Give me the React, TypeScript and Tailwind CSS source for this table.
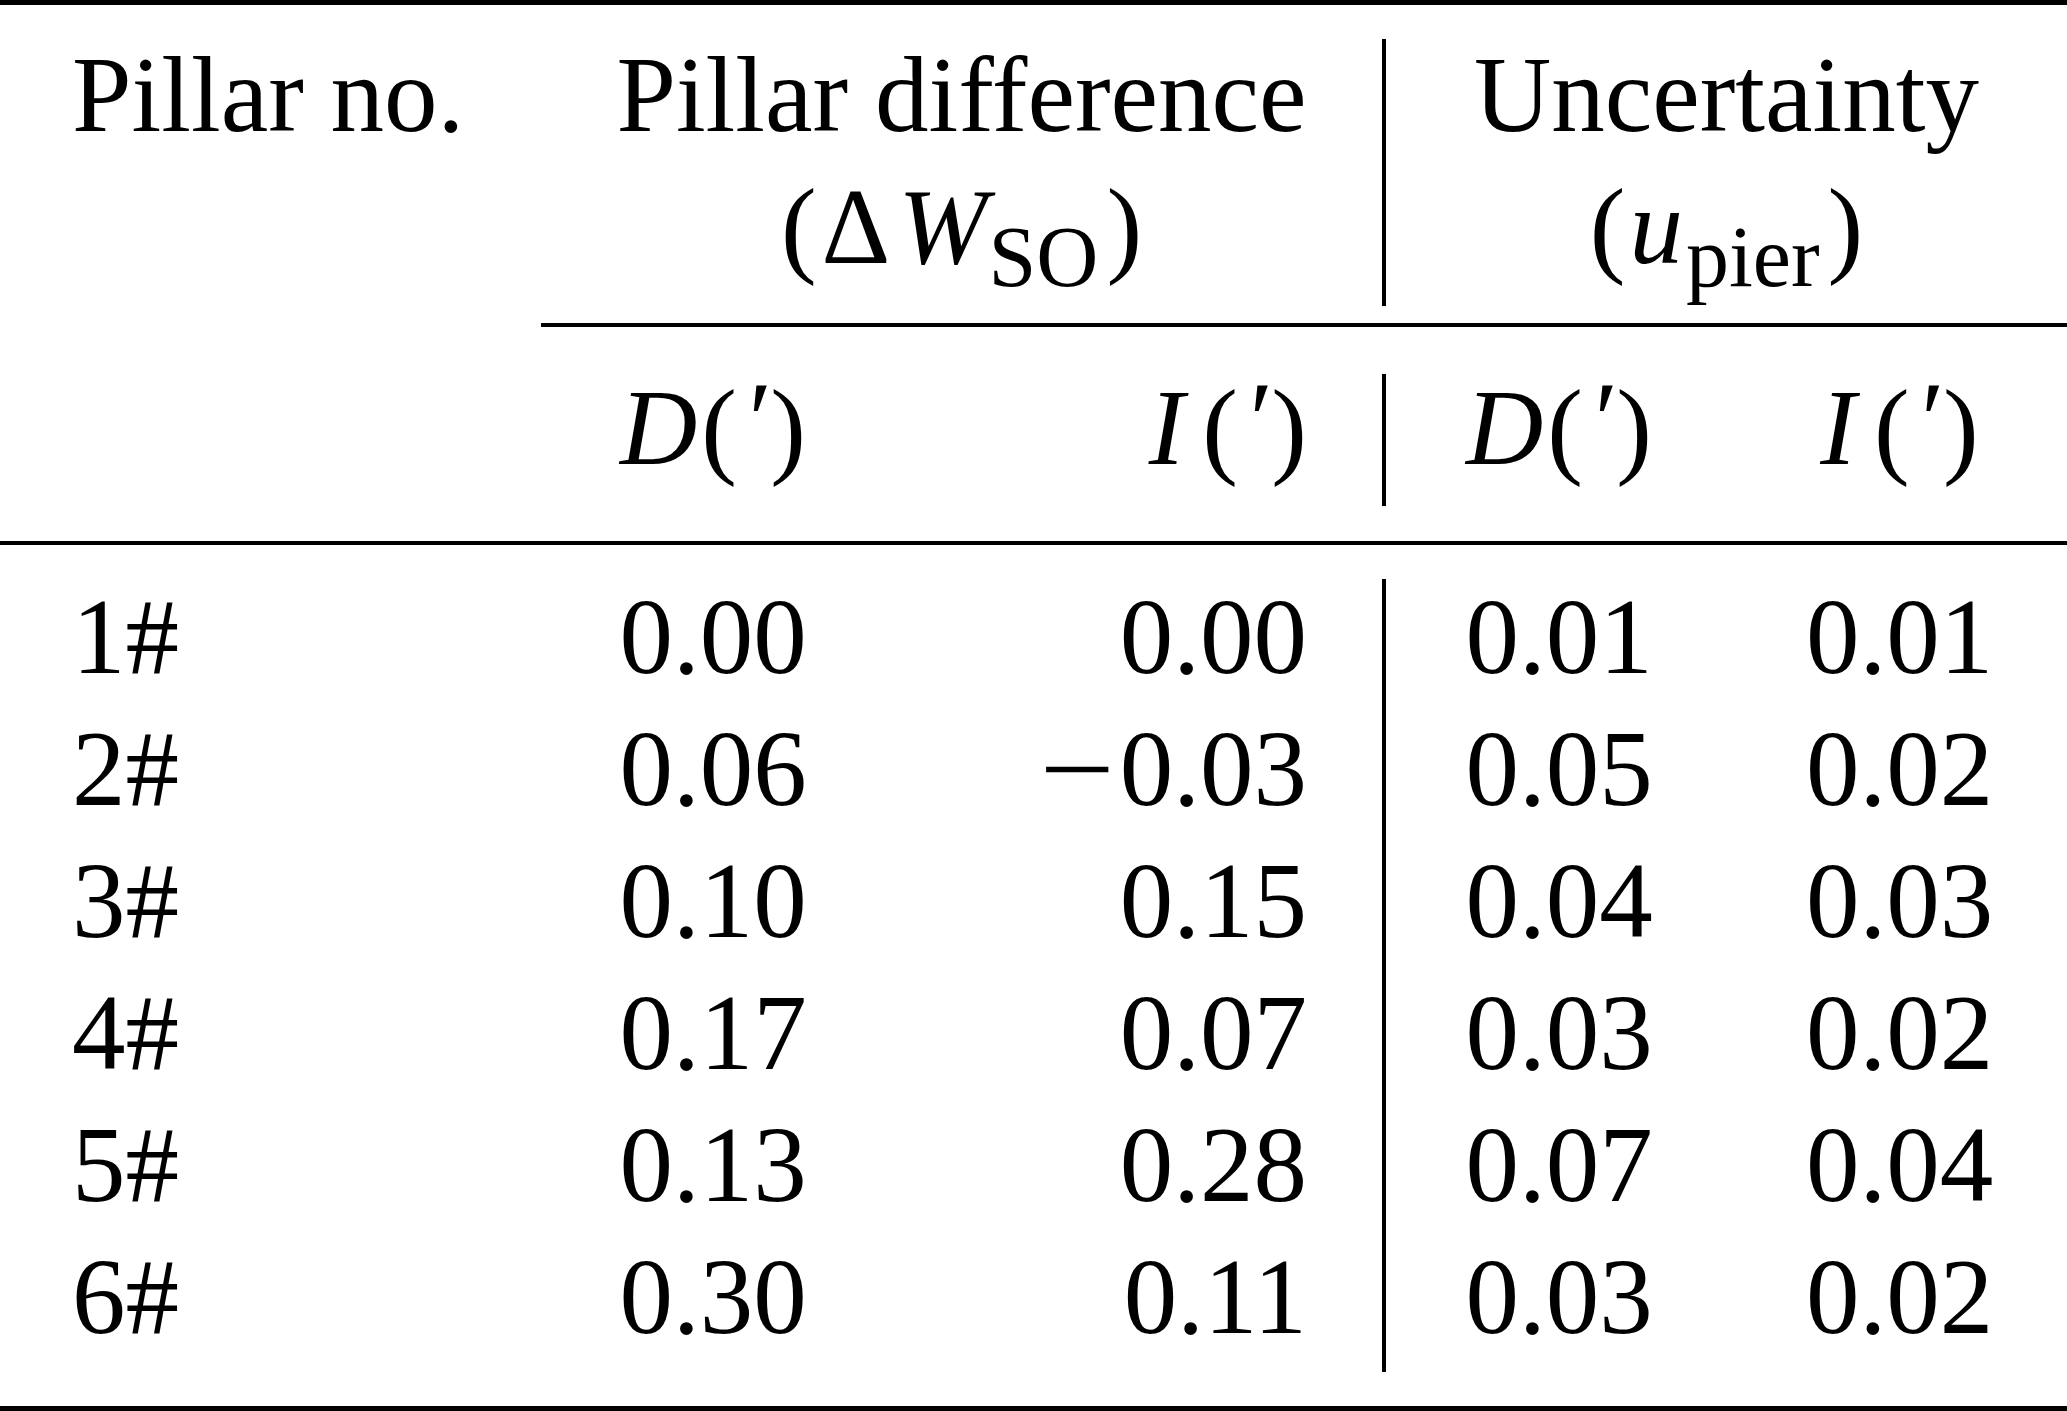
import React from "react";

const rows: string[][] = [
  ["1#", "0.00", "0.00", "0.01", "0.01"],
  ["2#", "0.06", "-0.03", "0.05", "0.02"],
  ["3#", "0.10", "0.15", "0.04", "0.03"],
  ["4#", "0.17", "0.07", "0.03", "0.02"],
  ["5#", "0.13", "0.28", "0.07", "0.04"],
  ["6#", "0.30", "0.11", "0.03", "0.02"],
];

function Num({ v }: { v: string }) {
  if (v.startsWith("-")) {
    return (
      <span>
        <span className="inline-block scale-x-125 mr-[12px]">{"\u2212"}</span>
        {v.slice(1)}
      </span>
    );
  }
  return <span>{v}</span>;
}

function Unit({ letter }: { letter: string }) {
  const isI = letter === "I";
  return (
    <span className="whitespace-nowrap">
      <span className={isI ? "italic mr-[18px]" : "italic mr-[4px]"}>{letter}</span>(
      <span className="relative top-[-8px] italic mx-[5px]">{"\u2032"}</span>)
    </span>
  );
}

export default function App() {
  return (
    <div
      className="w-[2067px] h-[1411px] bg-white text-black text-[107px] leading-[132px] overflow-hidden"
      style={{ fontFamily: '"Liberation Serif", "Times New Roman", serif' }}
    >
      {/* top rule */}
      <div className="h-[5px] bg-black" />

      {/* header block */}
      <div className="flex h-[318px]">
        <div className="w-[541px] pl-[72px] pt-[24px] whitespace-nowrap">Pillar no.</div>
        <div className="w-[841px] pt-[24px] flex flex-col items-center whitespace-nowrap">
          <div>Pillar difference</div>
          <div>
            (<span className="ml-[5px]">{"\u0394"}</span>
            <span className="italic ml-[8px]">W</span>
            <span className="relative top-[23px] text-[86px] leading-none ml-[1px] mr-[8px]">SO</span>)
          </div>
        </div>
        <div className="w-[4px] bg-black mt-[34px] mb-[17px]" />
        <div className="w-[681px] pt-[24px] flex flex-col items-center whitespace-nowrap">
          <div>Uncertainty</div>
          <div>
            (<span className="italic ml-[4px]">u</span>
            <span className="relative top-[23px] text-[86px] leading-none ml-[3px] mr-[8px]">pier</span>)
          </div>
        </div>
      </div>

      {/* cmidrule */}
      <div className="h-[4px] ml-[541px] bg-black" />

      {/* sub header block */}
      <div className="flex h-[214px]">
        <div className="w-[541px]" />
        <div className="w-[344px] pt-[35px] text-center">
          <Unit letter="D" />
        </div>
        <div className="w-[497px] pt-[35px] pr-[75px] text-right">
          <Unit letter="I" />
        </div>
        <div className="w-[4px] bg-black mt-[47px] mb-[35px]" />
        <div className="w-[346px] pt-[35px] text-center">
          <Unit letter="D" />
        </div>
        <div className="w-[335px] pt-[35px] text-center">
          <Unit letter="I" />
        </div>
      </div>

      {/* midrule */}
      <div className="h-[4px] bg-black" />

      {/* data block */}
      <div className="flex h-[861px]">
        <div className="w-[541px] pl-[72px] pt-[26px] flex flex-col">
          {rows.map((r) => (
            <div key={r[0]}>{r[0]}</div>
          ))}
        </div>
        <div className="w-[344px] pt-[26px] flex flex-col text-center">
          {rows.map((r) => (
            <div key={r[0]}>
              <Num v={r[1]} />
            </div>
          ))}
        </div>
        <div className="w-[497px] pt-[26px] pr-[75px] flex flex-col text-right">
          {rows.map((r) => (
            <div key={r[0]}>
              <Num v={r[2]} />
            </div>
          ))}
        </div>
        <div className="w-[4px] bg-black mt-[34px] mb-[34px]" />
        <div className="w-[346px] pt-[26px] flex flex-col text-center">
          {rows.map((r) => (
            <div key={r[0]}>
              <Num v={r[3]} />
            </div>
          ))}
        </div>
        <div className="w-[335px] pt-[26px] flex flex-col text-center">
          {rows.map((r) => (
            <div key={r[0]}>
              <Num v={r[4]} />
            </div>
          ))}
        </div>
      </div>

      {/* bottom rule */}
      <div className="h-[5px] bg-black" />
    </div>
  );
}
